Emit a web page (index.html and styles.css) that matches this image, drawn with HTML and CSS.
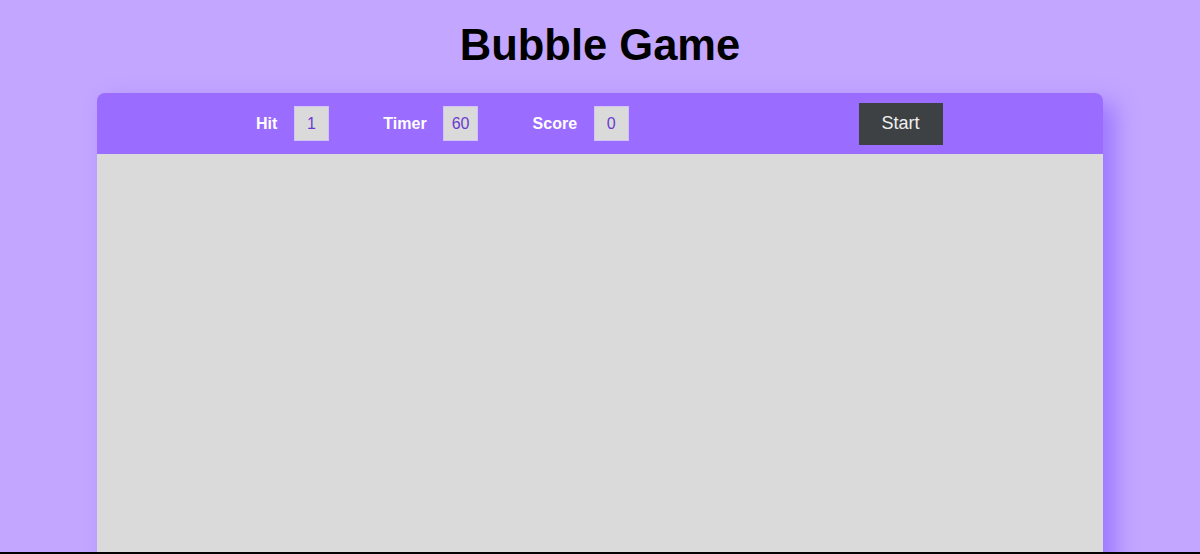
FILE: index.html
```html
<!DOCTYPE html>
<html lang="en">
<head>
<meta charset="utf-8">
<title>Bubble Game</title>
<link rel="stylesheet" href="styles.css">
</head>
<body>
<div class="page">
  <h1 class="title">Bubble Game</h1>
  <main class="panel">
    <header class="panel-top">
      <div class="stat"><span class="stat-label">Hit</span><span class="stat-box">1</span></div>
      <div class="stat"><span class="stat-label">Timer</span><span class="stat-box">60</span></div>
      <div class="stat"><span class="stat-label">Score</span><span class="stat-box">0</span></div>
      <button class="start-btn" type="button">Start</button>
    </header>
    <section class="panel-bottom"></section>
  </main>
</div>
</body>
</html>
```
FILE: styles.css
```css
* { box-sizing: border-box; }
html, body {
  margin: 0;
  padding: 0;
  background: #c2a6ff;
  font-family: "Liberation Sans", Arial, sans-serif;
}
.page {
  height: 554px;
  overflow: hidden;
  border-bottom: 2px solid #000;
  display: flex;
  flex-direction: column;
  align-items: center;
}
.title {
  flex-shrink: 0;
  margin: 19px 0 0;
  height: 74px;
  font-size: 43.5px;
  line-height: 52px;
  font-weight: 700;
  color: #000;
}
.panel {
  width: 1006px;
  flex-shrink: 0;
  border-radius: 8px;
  box-shadow: 12px 10px 22px rgba(130, 90, 255, 0.6);
  display: flex;
  flex-direction: column;
}
.panel-top {
  height: 61px;
  background: #9a6cff;
  border-radius: 8px 8px 0 0;
  display: flex;
  align-items: center;
  padding-left: 159px;
}
.stat {
  display: flex;
  align-items: center;
  gap: 16.5px;
  margin-right: 54.5px;
}
.stat:nth-child(3) { margin-right: 0; }
.stat-label {
  color: #fff;
  font-weight: 700;
  font-size: 16px;
}
.stat-box {
  width: 35px;
  height: 35px;
  background: #dadada;
  border: 1px solid #d2c2fa;
  color: #6a3ad0;
  font-size: 16px;
  display: flex;
  align-items: center;
  justify-content: center;
}
.start-btn {
  margin-left: 230px;
  width: 84px;
  height: 42px;
  background: #3d4143;
  color: #f0f0f0;
  border: none;
  font-family: "Liberation Sans", Arial, sans-serif;
  font-size: 18px;
  padding: 0;
}
.panel-bottom {
  height: 500px;
  background: #dadada;
}
```
